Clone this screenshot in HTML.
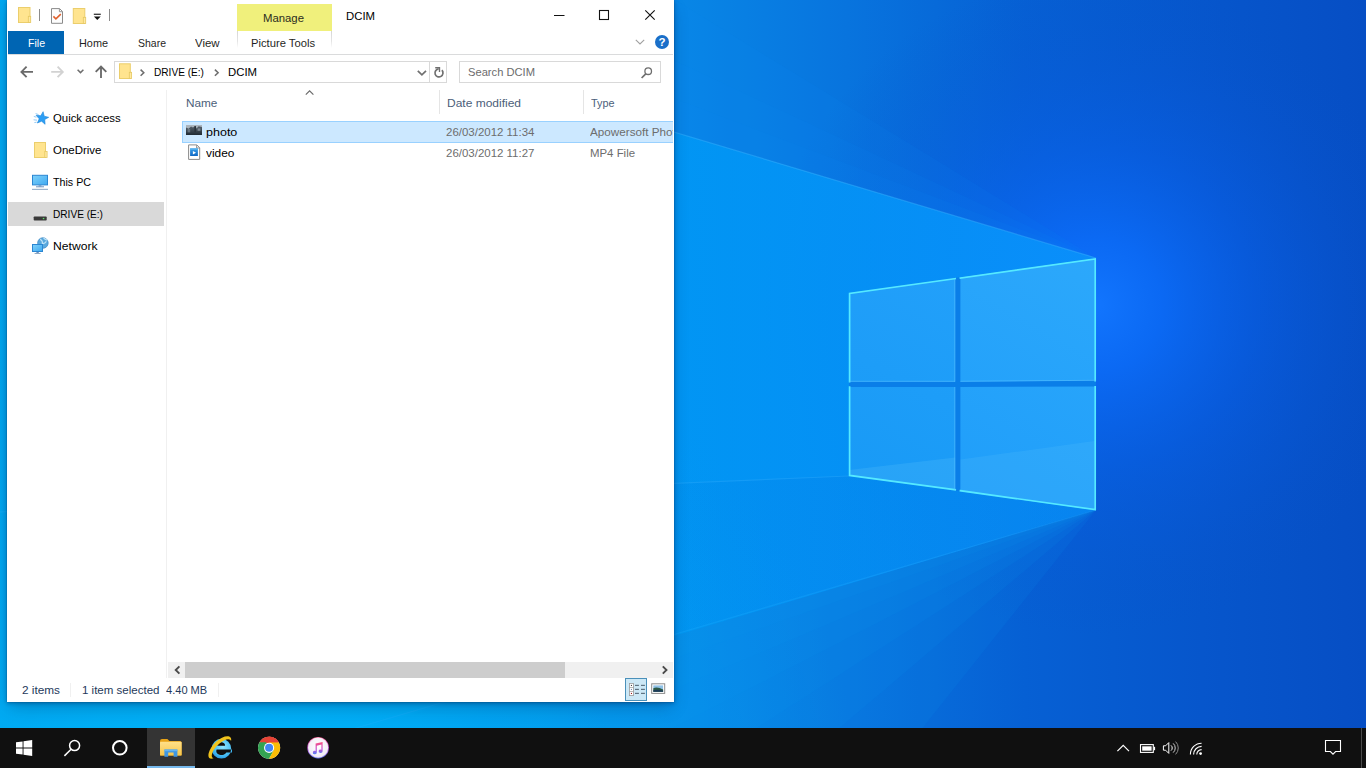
<!DOCTYPE html>
<html>
<head>
<meta charset="utf-8">
<title>DCIM</title>
<style>
html,body{margin:0;padding:0;}
body{width:1366px;height:768px;overflow:hidden;position:relative;background:#0a6fd8;font-family:"Liberation Sans",sans-serif;font-size:11.5px;color:#000;}
.abs{position:absolute;}
.t{position:absolute;white-space:nowrap;line-height:16px;height:16px;transform-origin:0 50%;}
#wall{position:absolute;left:0;top:0;width:1366px;height:768px;}
#win{position:absolute;left:7px;top:0;width:667px;height:702px;background:#fff;box-shadow:0 0 1px rgba(0,50,100,.5),0 1px 4px rgba(0,30,80,.42),0 7px 16px -3px rgba(0,25,70,.3);}
#taskbar{position:absolute;left:0;top:728px;width:1366px;height:40px;background:#101010;}
svg{position:absolute;overflow:visible;}
</style>
</head>
<body>

<!-- ================= WALLPAPER ================= -->
<svg id="wall" width="1366" height="768" viewBox="0 0 1366 768">
  <defs>
    <linearGradient id="gBase" x1="0" y1="0" x2="1366" y2="0" gradientUnits="userSpaceOnUse">
      <stop offset="0" stop-color="#00a8ee"/>
      <stop offset="0.26" stop-color="#00a6ee"/>
      <stop offset="0.5" stop-color="#0886e6"/>
      <stop offset="0.62" stop-color="#0874de"/>
      <stop offset="0.75" stop-color="#0660d4"/>
      <stop offset="0.88" stop-color="#0656cc"/>
      <stop offset="1" stop-color="#064ec4"/>
    </linearGradient>
    <linearGradient id="gBeam" x1="0" y1="0" x2="1096" y2="0" gradientUnits="userSpaceOnUse">
      <stop offset="0" stop-color="#00a6f0" stop-opacity=".6"/>
      <stop offset="0.62" stop-color="#0098f6" stop-opacity=".85"/>
      <stop offset="1" stop-color="#0a90fa" stop-opacity=".95"/>
    </linearGradient>
    <radialGradient id="gGlow" cx="1095" cy="305" r="330" gradientUnits="userSpaceOnUse">
      <stop offset="0" stop-color="#1276ff" stop-opacity=".98"/>
      <stop offset="0.2" stop-color="#0c6cfa" stop-opacity=".85"/>
      <stop offset="0.5" stop-color="#0a60ec" stop-opacity=".45"/>
      <stop offset="1" stop-color="#0a50c8" stop-opacity="0"/>
    </radialGradient>
    <linearGradient id="gPen" x1="674" y1="634.5" x2="742" y2="864" gradientUnits="userSpaceOnUse">
      <stop offset="0" stop-color="#0a90ee" stop-opacity=".5"/>
      <stop offset="1" stop-color="#0a90ee" stop-opacity="0"/>
    </linearGradient>
    <linearGradient id="gPaneR" x1="960" y1="500" x2="1096" y2="260" gradientUnits="userSpaceOnUse">
      <stop offset="0" stop-color="#1f9efa"/>
      <stop offset="1" stop-color="#2ca8fb"/>
    </linearGradient>
    <linearGradient id="gPaneL" x1="849" y1="480" x2="955" y2="280" gradientUnits="userSpaceOnUse">
      <stop offset="0" stop-color="#189af6"/>
      <stop offset="1" stop-color="#22a0fa"/>
    </linearGradient>
    <linearGradient id="gFloorD" x1="500" y1="0" x2="1096" y2="0" gradientUnits="userSpaceOnUse"><stop offset="0" stop-color="#0064d2" stop-opacity="0"/><stop offset="1" stop-color="#0064d2" stop-opacity=".22"/></linearGradient>
    <radialGradient id="gLow" cx="250" cy="860" r="620" gradientUnits="userSpaceOnUse">
      <stop offset="0" stop-color="#00b8fa" stop-opacity=".95"/>
      <stop offset="0.35" stop-color="#00b0f6" stop-opacity=".7"/>
      <stop offset="1" stop-color="#0098ec" stop-opacity="0"/>
    </radialGradient>
  </defs>
  <rect x="0" y="0" width="1366" height="768" fill="url(#gBase)"/>
  <rect x="0" y="0" width="1366" height="768" fill="url(#gGlow)"/>
  <g fill="#0a92ee" fill-opacity=".12"><polygon points="1096,510 -10,836 -10,900"/><polygon points="1096,510 -10,836 -10,980"/><polygon points="1096,510 -10,836 -10,1080"/><polygon points="1096,510 -10,836 -10,1220"/><polygon points="1096,510 -10,836 -10,1450"/><polygon points="1096,510 -10,836 -10,1900"/></g>
  <g fill="#0a8ef4" fill-opacity=".1"><polygon points="1096,258 -10,-72 -10,-160"/><polygon points="1096,258 -10,-72 -10,-260"/><polygon points="1096,258 -10,-72 -10,-420"/></g>
  <!-- light beam -->
  <polygon points="1096,258 -10,-72 -10,840 1096,510" fill="url(#gBeam)"/>
  <polygon points="-10,512.5 849,476 1096,510 -10,836" fill="url(#gFloorD)"/>
  <rect x="0" y="0" width="1366" height="768" fill="url(#gLow)"/>
  <!-- beam edge highlights -->
  <line x1="1096" y1="258" x2="0" y2="-69" stroke="#3cb4ff" stroke-opacity=".45" stroke-width="1.2"/>
  <line x1="849" y1="476" x2="0" y2="512" stroke="#3cb4ff" stroke-opacity=".3" stroke-width="1.2"/>
  <line x1="1096" y1="510" x2="0" y2="833" stroke="#3cb4ff" stroke-opacity=".18" stroke-width="1.2"/>
  <!-- logo panes -->
  <polygon points="849,476 1096,510 1096,258 849,293" fill="#0a7ee8"/>
  <g>
    <polygon points="849,293 955.2,278.2 955.2,381.7 849,381.7" fill="url(#gPaneL)"/>
    <polygon points="960.4,277.5 1096,258.4 1096,380.6 960.4,381.7" fill="url(#gPaneR)"/>
    <polygon points="849,387 955.2,387 955.2,490.3 849,475.8" fill="url(#gPaneL)"/>
    <polygon points="960.4,387 1096,386.6 1096,510.2 960.4,491.2" fill="url(#gPaneR)"/>
    <!-- floor reflection inside lower panes -->
    <polygon points="849,470 955.2,457.5 955.2,490.3 849,475.8" fill="#7fd4ff" fill-opacity=".16"/>
    <polygon points="960.4,459.6 1096,440.8 1096,510.2 960.4,491.2" fill="#7fd4ff" fill-opacity=".12"/>
  </g>
  <g fill="none" stroke="#55e9ff" stroke-width="1.7" stroke-linejoin="miter" stroke-linecap="square">
    <polyline points="849.6,381.7 849.6,293.4 955.2,278.6"/>
    <polyline points="960.4,278 1095.2,259 1095.2,380.6"/>
    <polyline points="849.6,387 849.6,475.4 955.2,489.8"/>
    <polyline points="960.4,490.7 1095.2,509.6 1095.2,386.8"/>
  </g>
  <g fill="none" stroke="#5cc4ff" stroke-opacity=".55" stroke-width="1">
    <line x1="954.8" y1="279" x2="954.8" y2="381.7"/>
    <line x1="954.8" y1="387" x2="954.8" y2="490"/>
    <line x1="849" y1="381.3" x2="955" y2="381.3"/>
    <line x1="960.4" y1="381.3" x2="1096" y2="380.3"/>
  </g>
</svg>

<!-- ================= EXPLORER WINDOW ================= -->
<div id="win"></div>
<div id="ui" class="abs" style="left:0;top:0;width:674px;height:702px;">
<!-- ribbon: File tab, Manage tab, Picture Tools tab -->
<div class="abs" style="left:8px;top:31px;width:56px;height:23px;background:#0065b3;"></div>
<div class="abs" style="left:237px;top:4px;width:95px;height:27px;background:#f0f07c;"></div>
<div class="abs" style="left:237px;top:31px;width:1px;height:17px;background:linear-gradient(#d6d6d6,#e4e4e4 60%,#fff);"></div>
<div class="abs" style="left:331px;top:31px;width:1px;height:17px;background:linear-gradient(#d6d6d6,#e4e4e4 60%,#fff);"></div>
<div class="abs" style="left:8px;top:54px;width:665px;height:1px;background:#dadbdc;"></div>
<!-- address + search boxes -->
<div class="abs" style="left:114px;top:61px;width:331px;height:20px;border:1px solid #d9d9d9;background:#fff;"></div>
<div class="abs" style="left:429px;top:62px;width:1px;height:20px;background:#d9d9d9;"></div>
<div class="abs" style="left:459px;top:61px;width:200px;height:20px;border:1px solid #d9d9d9;background:#fff;"></div>
<!-- nav pane separator / column separators -->
<div class="abs" style="left:166px;top:90px;width:1px;height:588px;background:#f0f0f0;"></div>
<div class="abs" style="left:439px;top:90px;width:1px;height:24px;background:#e5e5e5;"></div>
<div class="abs" style="left:583px;top:90px;width:1px;height:24px;background:#e5e5e5;"></div>
<!-- nav selection -->
<div class="abs" style="left:8px;top:202px;width:156px;height:24px;background:#d9d9d9;"></div>
<!-- selected row -->
<div class="abs" style="left:182px;top:121px;width:489.5px;height:20px;border:1px solid #99d1ff;border-right:none;background:#cce8ff;"></div>
<!-- scrollbar -->
<div class="abs" style="left:168px;top:662px;width:505px;height:16px;background:#f0f0f0;"></div>
<div class="abs" style="left:185px;top:662px;width:380px;height:16px;background:#cdcdcd;"></div>
<!-- status separators -->
<div class="abs" style="left:70px;top:683px;width:1px;height:14px;background:#f0f0f0;"></div>
<div class="abs" style="left:218px;top:683px;width:1px;height:14px;background:#f0f0f0;"></div>
<!-- view buttons -->
<div class="abs" style="left:625px;top:678px;width:20px;height:21px;border:1px solid #4a90ba;background:#cce8f6;"></div>
<!-- title bar quick-access icons -->
<svg class="abs" style="left:0;top:0" width="674" height="120" viewBox="0 0 674 120">
  <!-- folder 1 -->
  <rect x="18.5" y="7.5" width="11.5" height="15" fill="#ffe48f" stroke="#ebce6c" stroke-width="1"/>
  <rect x="28.3" y="16.3" width="2.4" height="6.2" fill="#ffe9a2" stroke="#e6c861" stroke-width=".8"/>
  <!-- separators -->
  <rect x="39" y="9" width="1" height="12" fill="#8c8c8c"/>
  <rect x="109" y="9" width="1" height="12" fill="#8c8c8c"/>
  <!-- properties doc with check -->
  <path d="M51.5 8.6 H59.6 L62.5 11.5 V23.3 H51.5 Z" fill="#fdfdfd" stroke="#8a8a8a" stroke-width="1"/>
  <path d="M59.4 8.8 V11.7 H62.4" fill="none" stroke="#8a8a8a" stroke-width=".9"/>
  <path d="M53.4 16.4 L55.9 18.9 L60.8 14.1" fill="none" stroke="#e0602c" stroke-width="1.5"/>
  <!-- folder 2 -->
  <rect x="73.3" y="8.5" width="11.5" height="15" fill="#ffe48f" stroke="#ebce6c" stroke-width="1"/>
  <rect x="83.3" y="17.3" width="2.4" height="6.2" fill="#ffe9a2" stroke="#e6c861" stroke-width=".8"/>
  <!-- customize dropdown -->
  <rect x="93.8" y="13.7" width="7" height="1.1" fill="#111"/>
  <path d="M93.9 16.4 H100.7 L97.3 19.9 Z" fill="#111"/>
  <!-- window controls -->
  <rect x="554" y="15" width="10.5" height="1" fill="#111"/>
  <rect x="599.5" y="10.5" width="9" height="9" fill="none" stroke="#111" stroke-width="1.1"/>
  <path d="M645.3 10.3 L654.7 19.7 M654.7 10.3 L645.3 19.7" stroke="#111" stroke-width="1.15" fill="none"/>
  <!-- ribbon expand chevron -->
  <path d="M635.8 39.8 L640 44 L644.2 39.8" fill="none" stroke="#a0a0a0" stroke-width="1.1"/>
  <!-- help -->
  <circle cx="662" cy="42" r="7" fill="#1a6fc9"/>
  <text x="662" y="46.2" font-family="Liberation Sans, sans-serif" font-weight="bold" font-size="11.5" fill="#fff" text-anchor="middle">?</text>
  <!-- nav arrows -->
  <g fill="none" stroke="#6a6a6a" stroke-width="1.85">
    <path d="M33 71.9 H21.6 M26.6 66.7 L21.4 71.9 L26.6 77.1"/>
    <path d="M101 78 V66.6 M95.7 71.8 L101 66.5 L106.3 71.8"/>
  </g>
  <path d="M51.2 71.9 H62.6 M57.6 66.7 L62.8 71.9 L57.6 77.1" fill="none" stroke="#d2d2d2" stroke-width="1.85"/>
  <path d="M77.6 69.7 L80.5 72.6 L83.4 69.7" fill="none" stroke="#6e6e6e" stroke-width="1.5"/>
  <!-- address folder -->
  <rect x="119.5" y="63.8" width="10.8" height="14.7" fill="#ffe48f" stroke="#ebce6c" stroke-width="1"/>
  <rect x="129.3" y="72.3" width="2.3" height="6.2" fill="#ffe9a2" stroke="#e6c861" stroke-width=".8"/>
  <!-- breadcrumb chevrons -->
  <g fill="none" stroke="#6e6e6e" stroke-width="1.55">
    <path d="M140.6 69.6 L143.8 72.7 L140.6 75.8"/>
    <path d="M214.9 69.6 L218.1 72.7 L214.9 75.8"/>
  </g>
  <!-- address dropdown chevron -->
  <path d="M417.8 70.8 L421.9 74.9 L426 70.8" fill="none" stroke="#707070" stroke-width="1.7"/>
  <!-- refresh -->
  <path d="M441.9 70.2 A4 4 0 1 1 438.6 68.95" fill="none" stroke="#707070" stroke-width="1.7"/>
  <path d="M435.2 67.7 H439.5 V71.9" fill="none" stroke="#707070" stroke-width="1.35"/>
  <!-- search magnifier -->
  <circle cx="648.2" cy="71.2" r="3.3" fill="none" stroke="#6e6e6e" stroke-width="1.3"/>
  <path d="M646 73.6 L641.6 78" stroke="#6e6e6e" stroke-width="1.7" fill="none"/>
  <!-- sort arrow -->
  <path d="M305.8 94.6 L309.6 90.8 L313.4 94.6" fill="none" stroke="#6a6a6a" stroke-width="1.15"/>
</svg>
<!-- sidebar + file list icons -->
<svg class="abs" style="left:0;top:0" width="674" height="702" viewBox="0 0 674 702">
  <defs>
    <linearGradient id="scr" x1="0" y1="0" x2="1" y2="1">
      <stop offset="0" stop-color="#7fd2fb"/><stop offset="1" stop-color="#3fa9f0"/>
    </linearGradient>
    <linearGradient id="flm" x1="0" y1="0" x2="0" y2="1">
      <stop offset="0" stop-color="#3aa0ea"/><stop offset="1" stop-color="#0f67c4"/>
    </linearGradient>
    <linearGradient id="thumb" x1="0" y1="0" x2="0" y2="1">
      <stop offset="0" stop-color="#5f6a74"/><stop offset="1" stop-color="#1f2a33"/>
    </linearGradient>
  </defs>
  <!-- quick access star -->
  <g stroke="#55aaf0" stroke-width=".8" fill="none" opacity=".8">
    <path d="M35.6 113.6 L38.6 114.6 M33.8 116.4 L36.4 117.2 M33.6 119.8 L37 120.2 M34.4 122.6 L36.6 122.2"/>
  </g>
  <path d="M43.1 111.7 L44.2 116.2 L48.7 117.3 L44.7 119.6 L45.1 124.3 L41.6 121.2 L37.4 123.0 L39.2 118.8 L36.1 115.3 L40.8 115.7 Z" fill="#2c9ef4" stroke="#1c84d8" stroke-width=".6" stroke-linejoin="round"/>
  <!-- OneDrive folder -->
  <rect x="34.5" y="142.5" width="11" height="15" fill="#ffe48f" stroke="#ebce6c" stroke-width="1"/>
  <rect x="44.8" y="151.4" width="2.3" height="6.1" fill="#ffe9a2" stroke="#e6c861" stroke-width=".8"/>
  <!-- This PC -->
  <rect x="32.5" y="175.3" width="15" height="9.6" fill="url(#scr)" stroke="#2b86d2" stroke-width="1"/>
  <rect x="38.6" y="185.3" width="2.8" height="1.2" fill="#6c93bf"/>
  <rect x="36" y="186.3" width="8" height="1" fill="#6c93bf"/>
  <rect x="32" y="188.8" width="16" height="1.2" fill="#9db4cd"/>
  <!-- Drive -->
  <path d="M35.4 216.6 L36.6 213.6 H44.6 L45.8 216.6 Z" fill="#dcdcdc"/>
  <rect x="33.7" y="216.4" width="13" height="4.2" rx=".8" fill="#3a3a3a"/>
  <rect x="42.8" y="217.9" width="1.5" height="1.3" fill="#5fe26a"/>
  <!-- Network -->
  <circle cx="42.9" cy="243" r="5.3" fill="#5aa9de" stroke="#3b86c4" stroke-width=".7"/>
  <path d="M40.2 239.2 Q43 241 42.4 243.6 Q44.6 244 46.4 241.4 M43.5 238 Q45.4 239.6 47.4 240.2" fill="none" stroke="#bfe3f7" stroke-width="1.1"/>
  <rect x="32.5" y="244.5" width="10" height="7" fill="url(#scr)" stroke="#2b86d2" stroke-width="1"/>
  <rect x="36.4" y="252" width="2.4" height="1.2" fill="#6c93bf"/>
  <rect x="34.6" y="253" width="6" height="1" fill="#8fa9c5"/>
  <!-- photo thumbnail -->
  <rect x="186" y="125" width="16" height="10" fill="url(#thumb)"/>
  <path d="M186 125 H202 V127 L198.6 126.2 L196.6 128.4 L195.4 125.8 L193 127.6 L191 126.4 L188.6 128.8 L186 127.6 Z" fill="#b9c3cb" opacity=".85"/>
  <rect x="194.4" y="126.2" width="1.6" height="6" fill="#2a333b"/>
  <rect x="197.6" y="128.4" width="2.8" height="2.4" fill="#8d99a3" opacity=".8"/>
  <rect x="187.6" y="129" width="2.6" height="3.4" fill="#7b8791" opacity=".7"/>
  <!-- video file icon -->
  <path d="M188.6 144.9 H196.8 L199.7 147.8 V159.4 H188.6 Z" fill="#fff" stroke="#8a8a8a" stroke-width="1"/>
  <path d="M196.6 145.1 V148 H199.5" fill="none" stroke="#8a8a8a" stroke-width=".9"/>
  <rect x="190.1" y="148.4" width="7.8" height="7.6" fill="url(#flm)"/>
  <rect x="190.1" y="148.4" width="7.8" height="1.4" fill="#58b4f0"/>
  <path d="M192.9 150.9 L196 152.7 L192.9 154.5 Z" fill="#fff"/>
  <!-- scrollbar arrows -->
  <path d="M179.4 666.3 L175.7 670 L179.4 673.7" fill="none" stroke="#4a4a4a" stroke-width="1.9"/>
  <path d="M662.8 666.3 L666.5 670 L662.8 673.7" fill="none" stroke="#4a4a4a" stroke-width="1.9"/>
  <!-- details view button glyph -->
  <g>
    <rect x="629.4" y="683.4" width="4" height="12.2" fill="#fff" stroke="#9a9a9a" stroke-width=".8"/>
    <rect x="629.4" y="687.2" width="4" height=".7" fill="#9a9a9a"/>
    <rect x="629.4" y="691.2" width="4" height=".7" fill="#9a9a9a"/>
    <rect x="630.9" y="684.9" width="1.1" height="1.1" fill="#444"/>
    <rect x="630.9" y="688.9" width="1.1" height="1.1" fill="#7a8fb0"/>
    <rect x="630.9" y="692.9" width="1.1" height="1.1" fill="#a02020"/>
    <g fill="#5f7382">
      <rect x="635" y="684.8" width="3.9" height="1.2"/><rect x="641" y="684.8" width="3.9" height="1.2"/>
      <rect x="635" y="688.8" width="3.9" height="1.2"/><rect x="641" y="688.8" width="3.9" height="1.2"/>
      <rect x="635" y="692.8" width="3.9" height="1.2"/><rect x="641" y="692.8" width="3.9" height="1.2"/>
    </g>
  </g>
  <!-- large icons view glyph -->
  <rect x="651.7" y="683.8" width="13" height="9.6" fill="#fff" stroke="#8c8c8c" stroke-width="1"/>
  <rect x="653.3" y="685.4" width="9.8" height="6.4" fill="#8fc1e6"/>
  <path d="M653.3 688.2 Q657 686.2 663.1 689.4 V691.8 H653.3 Z" fill="#2d5a46"/>
  <path d="M653.3 690.2 Q658 689 663.1 690.8 V691.8 H653.3 Z" fill="#1d3a58"/>
</svg>
<span class="t" style="left:27.6px;top:35.02px;color:#fff;transform:scaleX(0.923);">File</span>
<span class="t" style="left:78.5px;top:35.02px;color:#1f1f24;transform:scaleX(0.945);">Home</span>
<span class="t" style="left:137.6px;top:35.02px;color:#1f1f24;transform:scaleX(0.912);">Share</span>
<span class="t" style="left:195.3px;top:35.02px;color:#1f1f24;transform:scaleX(0.995);">View</span>
<span class="t" style="left:263.4px;top:9.82px;color:#2c2c1e;transform:scaleX(0.986);">Manage</span>
<span class="t" style="left:251.3px;top:35.02px;color:#1f1f24;transform:scaleX(0.975);">Picture Tools</span>
<span class="t" style="left:345.6px;top:7.62px;color:#000;transform:scaleX(0.987);">DCIM</span>
<span class="t" style="left:154.4px;top:64.02px;color:#000;transform:scaleX(0.879);">DRIVE (E:)</span>
<span class="t" style="left:228.4px;top:64.02px;color:#000;transform:scaleX(0.987);">DCIM</span>
<span class="t" style="left:468.1px;top:64.02px;color:#6d6d6d;transform:scaleX(0.971);">Search DCIM</span>
<span class="t" style="left:185.6px;top:95.22px;color:#4c607a;transform:scaleX(1.023);">Name</span>
<span class="t" style="left:446.6px;top:95.22px;color:#4c607a;transform:scaleX(1.043);">Date modified</span>
<span class="t" style="left:590.5px;top:95.22px;color:#4c607a;transform:scaleX(0.942);">Type</span>
<span class="t" style="left:206.2px;top:123.92px;color:#000;transform:scaleX(1.088);">photo</span>
<span class="t" style="left:206.2px;top:144.82px;color:#000;transform:scaleX(1.033);">video</span>
<span class="t" style="left:445.9px;top:123.92px;color:#6d6d6d;transform:scaleX(0.997);">26/03/2012 11:34</span>
<span class="t" style="left:445.9px;top:144.82px;color:#6d6d6d;transform:scaleX(0.997);">26/03/2012 11:27</span>
<span class="t" style="left:589.9px;top:144.82px;color:#6d6d6d;transform:scaleX(0.992);">MP4 File</span>
<span class="t" style="left:53.2px;top:109.82px;color:#000;transform:scaleX(0.988);">Quick access</span>
<span class="t" style="left:53.2px;top:141.82px;color:#000;transform:scaleX(0.998);">OneDrive</span>
<span class="t" style="left:53.2px;top:173.82px;color:#000;transform:scaleX(0.929);">This PC</span>
<span class="t" style="left:53.2px;top:205.82px;color:#000;transform:scaleX(0.879);">DRIVE (E:)</span>
<span class="t" style="left:53.2px;top:237.82px;color:#000;transform:scaleX(1.055);">Network</span>
<span class="t" style="left:22px;top:681.52px;color:#1e395b;transform:scaleX(1.025);">2 items</span>
<span class="t" style="left:81.7px;top:681.52px;color:#1e395b;transform:scaleX(1.002);">1 item selected</span>
<span class="t" style="left:166.3px;top:681.52px;color:#1e395b;transform:scaleX(0.962);">4.40 MB</span>
<div class="abs" style="left:583px;top:121px;width:89.5px;height:22px;overflow:hidden;"><span class="t" style="left:6.9px;top:2.92px;color:#6d6d6d;transform:scaleX(1.017);">Apowersoft Photo Viewer</span></div>
</div>

<!-- ================= TASKBAR ================= -->
<div id="taskbar">
<div class="abs" style="left:147px;top:0;width:48px;height:40px;background:#343434;"></div>
<div class="abs" style="left:147px;top:38px;width:48px;height:2px;background:#76b9ed;"></div>
<div class="abs" style="left:1361px;top:0;width:1px;height:40px;background:#4a4a4a;"></div>
<svg class="abs" style="left:0;top:0" width="1366" height="40" viewBox="0 728 1366 40">
  <defs>
    <linearGradient id="fold" x1="0" y1="0" x2="0" y2="1"><stop offset="0" stop-color="#ffe08a"/><stop offset="1" stop-color="#f7c64a"/></linearGradient>
    <radialGradient id="itn" cx=".5" cy=".45" r=".6"><stop offset="0" stop-color="#ffffff"/><stop offset=".8" stop-color="#f3eef6"/><stop offset="1" stop-color="#d9c7e8"/></radialGradient>
    <linearGradient id="itr" x1="0" y1="0" x2="0" y2="1"><stop offset="0" stop-color="#f55c8c"/><stop offset=".5" stop-color="#c856d8"/><stop offset="1" stop-color="#5f7af2"/></linearGradient>
    <linearGradient id="note" x1="0" y1="0" x2="0" y2="1"><stop offset="0" stop-color="#fb4f7e"/><stop offset=".6" stop-color="#c14fd6"/><stop offset="1" stop-color="#4f86f5"/></linearGradient>
    <radialGradient id="ieb" cx=".55" cy=".4" r=".65"><stop offset="0" stop-color="#8fe6ff"/><stop offset=".6" stop-color="#4fc4f6"/><stop offset="1" stop-color="#2397e2"/></radialGradient>
  </defs>
  <!-- start -->
  <path d="M16 742.3 L22.6 741.4 V747.6 H16 Z M23.5 741.3 L32.2 740 V747.6 H23.5 Z M16 748.4 H22.6 V754.6 L16 753.7 Z M23.5 748.4 H32.2 V756 L23.5 754.7 Z" fill="#fff"/>
  <!-- search -->
  <circle cx="74.6" cy="745.6" r="5" fill="none" stroke="#fff" stroke-width="1.5"/>
  <path d="M71.1 749.3 L64.4 755.9" stroke="#fff" stroke-width="1.5" fill="none"/>
  <!-- cortana -->
  <circle cx="119.8" cy="747.8" r="6.8" fill="none" stroke="#fff" stroke-width="2"/>
  <!-- explorer -->
  <path d="M160 741 Q160 739 162 739 H167.4 L169.4 741 H180 Q181.6 741 181.6 742.6 V755.4 H160 Z" fill="#e8a317"/>
  <rect x="160" y="741.8" width="21.6" height="13.8" rx=".8" fill="url(#fold)"/>
  <path d="M164.4 756.8 V749.6 H177.4 V756.8 H173.6 V752.6 H168.2 V756.8 Z" fill="#3f97e3"/>
  <rect x="164.4" y="749.6" width="13" height="1.6" fill="#64b4f2"/>
  <!-- IE -->
  <g>
    <path d="M231.2 748.7 A9.8 9.9 0 1 1 211.6 748.7 A9.8 9.9 0 1 1 231.2 748.7 Z M217.3 745.8 A3.9 3.6 0 0 1 225.1 745.8 Z M216.6 749.6 H232 V752.6 H226.4 A5 3.8 0 0 1 216.6 749.6 Z" fill="url(#ieb)" fill-rule="evenodd"/>
    <path d="M213.6 758.2 C205.6 761 207.4 750 216 741.8 C223.4 734.8 232.8 734 231 741.2 C230.4 738.2 225.4 738.4 218.4 744.4 C211.4 750.6 210.2 757.8 213.6 758.2 Z" fill="#f2c41c"/>
  </g>
  <!-- chrome -->
  <g>
    <circle cx="269.1" cy="747.8" r="11" fill="#fff"/>
    <path d="M269.1 747.8 L259.6 742.3 A11 11 0 0 1 278.6 742.3 Z" fill="#e64335"/>
    <path d="M269.1 736.8 A11 11 0 0 1 278.6 742.3 H269.1 Z" fill="#e64335"/>
    <path d="M259.57 742.3 A11 11 0 0 0 269.1 758.8 L274.6 749 L269.1 747.8 Z" fill="#34a353"/>
    <path d="M278.63 742.3 A11 11 0 0 1 269.1 758.8 L273.6 750.6 L269.1 742.3 Z" fill="#fbbd05"/>
    <path d="M259.57 742.3 A11 11 0 0 1 278.63 742.3 L269.1 742.3 Z" fill="#e64335"/>
    <path d="M259.57 742.3 L264.8 751.2 L269.1 747.8 L266 742.3 Z" fill="#34a353"/>
    <circle cx="269.1" cy="747.8" r="5.1" fill="#fff"/>
    <circle cx="269.1" cy="747.8" r="4" fill="#4285f4"/>
  </g>
  <!-- itunes -->
  <g>
    <circle cx="318.1" cy="747.7" r="10.8" fill="url(#itr)"/>
    <circle cx="318.1" cy="747.7" r="10.1" fill="url(#itn)"/>
    <path d="M315.6 743.6 L322.6 742 V751.2 A2 1.7 0 1 1 321.4 749.7 V744.6 L316.8 745.7 V752.6 A2 1.7 0 1 1 315.6 751.1 Z" fill="url(#note)"/>
  </g>
  <!-- tray chevron -->
  <path d="M1117.4 751.2 L1123.2 745.4 L1129 751.2" fill="none" stroke="#fff" stroke-width="1.2"/>
  <!-- battery -->
  <rect x="1140.5" y="744.6" width="12.8" height="7.8" fill="none" stroke="#fff" stroke-width="1.1"/>
  <rect x="1142.2" y="746.3" width="9.4" height="4.4" fill="#fff"/>
  <rect x="1153.8" y="746.8" width="1.3" height="3.4" fill="#fff"/>
  <!-- volume -->
  <path d="M1163.4 745.8 H1165.6 L1168.8 742.6 V753.4 L1165.6 750.2 H1163.4 Z" fill="none" stroke="#fff" stroke-width="1"/>
  <path d="M1171 745.4 A3.4 3.4 0 0 1 1171 750.6" fill="none" stroke="#fff" stroke-width="1"/>
  <path d="M1173.2 743.4 A6.2 6.2 0 0 1 1173.2 752.6" fill="none" stroke="#cfcfcf" stroke-width="1"/>
  <path d="M1175.6 741.6 A9 9 0 0 1 1175.6 754.4" fill="none" stroke="#8c8c8c" stroke-width="1"/>
  <!-- wifi -->
  <g fill="none" stroke="#fff" stroke-width="1.1">
    <path d="M1190.4 754.4 A11.2 11.2 0 0 1 1201.6 743.2"/>
    <path d="M1193.6 754.4 A8 8 0 0 1 1201.6 746.4"/>
    <path d="M1196.8 754.4 A4.8 4.8 0 0 1 1201.6 749.6"/>
  </g>
  <circle cx="1200.6" cy="753.6" r="1.4" fill="#fff"/>
  <!-- notification -->
  <path d="M1325.5 740.5 H1340.5 V751.5 H1335.6 L1333 754.2 L1330.4 751.5 H1325.5 Z" fill="none" stroke="#fff" stroke-width="1.1"/>
</svg>
</div>

</body>
</html>
